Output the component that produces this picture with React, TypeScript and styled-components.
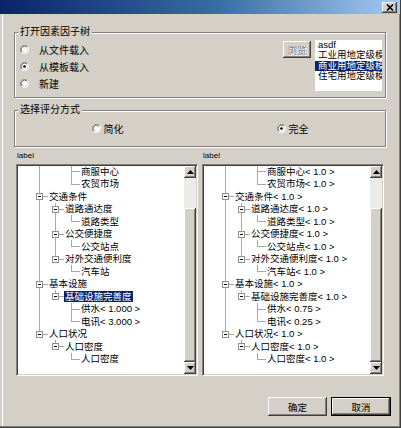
import React from "react";
import styled, { createGlobalStyle, css } from "styled-components";

const Global = createGlobalStyle`
  html, body { margin: 0; padding: 0; background: #d4d0c8; }
  body {
    width: 401px; height: 428px; overflow: hidden;
    font-family: "Liberation Sans", "Noto Sans CJK SC", sans-serif;
  }
  * { box-sizing: border-box; }
`;

const FONT = `"Liberation Sans", "Noto Sans CJK SC", sans-serif`;

const Window = styled.div`
  width: 401px;
  height: 428px;
  display: flex;
  flex-direction: column;
  background: #d4d0c8;
  border-right: 1px solid #404040;
  border-bottom: 1px solid #404040;
  box-shadow: inset -1px -1px 0 #808080, inset 2px 0 0 #d4d0c8, inset 3px 0 0 #fff;
`;

const TitleBar = styled.div`
  height: 14px;
  flex: none;
  display: flex;
  align-items: center;
  justify-content: flex-end;
  padding-right: 3px;
  background: linear-gradient(to right, #0a246a 0%, #3a6ea5 55%, #a6caf0 100%);
`;

const raised = css`
  background: #d4d0c8;
  box-shadow: inset -1px -1px 0 #404040, inset 1px 1px 0 #fff,
    inset -2px -2px 0 #808080, inset 2px 2px 0 #d4d0c8;
`;

const CloseButton = styled.div`
  ${raised};
  width: 15px;
  height: 11px;
  display: flex;
  align-items: center;
  justify-content: center;
`;

const Body = styled.div`
  flex: 1;
  display: flex;
  flex-direction: column;
  padding: 12px 14px 11px 14px;
`;

const Group = styled.fieldset<{ $mt: number }>`
  margin: ${(p) => p.$mt}px 0 0 0;
  padding: 0;
  border: 1px solid #808080;
  box-shadow: inset 1px 1px 0 #fff, 1px 1px 0 #fff;
  min-width: 0;
`;

const Legend = styled.legend`
  margin-left: 3px;
  padding: 0 2px;
  background: #d4d0c8;
  font-family: ${FONT};
  font-size: 10px;
  line-height: 12px;
  color: #000;
`;

const OpenContent = styled.div`
  display: flex;
  align-items: flex-start;
  padding: 2px 3px 5px 5px;
`;

const RadioColumn = styled.div`
  flex: 1;
  display: flex;
  flex-direction: column;
  padding-top: 1px;
`;

const RadioRow = styled.label<{ $gap: number; $h: number }>`
  display: flex;
  align-items: center;
  gap: ${(p) => p.$gap}px;
  height: ${(p) => p.$h}px;
  font-family: ${FONT};
  font-size: 10px;
  color: #000;
`;

const BrowseButton = styled.div`
  ${raised};
  width: 28px;
  height: 17px;
  margin-top: 1px;
  margin-right: 4px;
  display: flex;
  align-items: center;
  justify-content: center;
  font-family: ${FONT};
  font-size: 9.5px;
  color: #808080;
  text-shadow: 1px 1px 0 #fff;
`;

const ListBox = styled.div`
  width: 67px;
  height: 51px;
  background: #fff;
  overflow: hidden;
  display: flex;
  flex-direction: column;
`;

const ListItem = styled.div<{ $sel?: boolean }>`
  height: 10.4px;
  line-height: 10.4px;
  padding-left: 3px;
  white-space: nowrap;
  font-family: ${FONT};
  font-size: 9.5px;
  color: ${(p) => (p.$sel ? "#fff" : "#000")};
  background: ${(p) => (p.$sel ? "#0a246a" : "transparent")};
`;

const ModeContent = styled.div`
  display: grid;
  grid-template-columns: 1fr 1fr;
  justify-items: center;
  padding: 0 0 6px 0;
`;

const LabelsAndTrees = styled.div`
  display: grid;
  grid-template-columns: 182px 182px;
  column-gap: 4px;
  margin: 4px 0 0 2px;
`;

const TreeColumn = styled.div`
  display: flex;
  flex-direction: column;
`;

const SmallLabel = styled.div`
  font-family: ${FONT};
  font-size: 8px;
  line-height: 10px;
  height: 10px;
  margin: 0 0 3px 1px;
  color: #000;
`;

const TreeBox = styled.div`
  height: 212px;
  display: flex;
  background: #fff;
  border: 1px solid;
  border-color: #808080 #fff #fff #808080;
  box-shadow: inset 1px 1px 0 #404040, inset -1px -1px 0 #d4d0c8;
  padding: 1px;
`;

const TreeArea = styled.div`
  flex: 1;
  overflow: hidden;
  min-width: 0;
`;

const TreeList = styled.div`
  margin-top: -1px;
  display: flex;
  flex-direction: column;
`;

const Row = styled.div`
  display: flex;
  align-items: center;
  height: 12.5px;
  padding-left: 14px;
  white-space: nowrap;
`;

const Guide = styled.span<{ $on: boolean }>`
  position: relative;
  width: 16px;
  flex: none;
  align-self: stretch;
  ${(p) =>
    p.$on &&
    css`
      &::before {
        content: "";
        position: absolute;
        left: 7px;
        top: 0;
        bottom: 0;
        border-left: 1px solid #a8a8a8;
      }
    `}
`;

const Joint = styled.span<{ $last: boolean }>`
  position: relative;
  width: 16px;
  flex: none;
  align-self: stretch;
  &::before {
    content: "";
    position: absolute;
    left: 7px;
    top: 0;
    bottom: ${(p) => (p.$last ? "50%" : "0")};
    border-left: 1px solid #a8a8a8;
  }
  &::after {
    content: "";
    position: absolute;
    left: 7px;
    top: 50%;
    width: 9px;
    border-top: 1px solid #a8a8a8;
  }
`;

const Expander = styled.span`
  position: absolute;
  z-index: 1;
  left: 4px;
  top: calc(50% - 3px);
  width: 7px;
  height: 7px;
  border: 1px solid #909090;
  background: #fff;
  &::after {
    content: "";
    position: absolute;
    left: 1px;
    top: 2px;
    width: 3px;
    border-top: 1px solid #000;
  }
`;

const NodeText = styled.span<{ $sel?: boolean }>`
  font-family: ${FONT};
  font-size: 9.5px;
  line-height: 11px;
  height: 11px;
  padding: 0 1px;
  color: ${(p) => (p.$sel ? "#fff" : "#000")};
  background: ${(p) => (p.$sel ? "#0a246a" : "transparent")};
`;

const ScrollBar = styled.div`
  width: 12px;
  flex: none;
  display: flex;
  flex-direction: column;
`;

const ScrollButton = styled.div`
  ${raised};
  height: 12px;
  flex: none;
  display: flex;
  align-items: center;
  justify-content: center;
`;

const TrackLight = styled.div<{ $h: number }>`
  height: ${(p) => p.$h}px;
  flex: none;
  background: #ecebe7;
`;

const Thumb = styled.div`
  ${raised};
  flex: 1;
`;

const ButtonRow = styled.div`
  margin-top: auto;
  display: flex;
  justify-content: flex-end;
  gap: 4px;
  padding-right: -5px;
  margin-right: -5px;
`;

const DialogButton = styled.div<{ $default?: boolean }>`
  ${raised};
  width: ${(p) => (p.$default ? 60 : 59)}px;
  height: 19px;
  display: flex;
  align-items: center;
  justify-content: center;
  font-family: ${FONT};
  font-size: 9.5px;
  color: #000;
  ${(p) =>
    p.$default &&
    css`
      box-shadow: inset 0 0 0 1px #000, inset -2px -2px 0 #404040,
        inset 2px 2px 0 #fff, inset -3px -3px 0 #808080;
    `}
`;

const Radio = ({ checked }: { checked?: boolean }) => (
  <svg width="9" height="9" viewBox="0 0 12 12" style={{ flex: "none" }}>
    <circle cx="6" cy="6" r="5.5" fill="#fff" />
    <path d="M2.11 9.89 A5.5 5.5 0 0 1 9.89 2.11" stroke="#808080" fill="none" />
    <path d="M9.89 2.11 A5.5 5.5 0 0 1 2.11 9.89" stroke="#fff" fill="none" />
    <path d="M2.82 9.18 A4.5 4.5 0 0 1 9.18 2.82" stroke="#404040" fill="none" />
    <path d="M9.18 2.82 A4.5 4.5 0 0 1 2.82 9.18" stroke="#d4d0c8" fill="none" />
    {checked && <circle cx="6" cy="6" r="1.8" fill="#000" />}
  </svg>
);

const Arrow = ({ up }: { up?: boolean }) => (
  <svg width="7" height="4" viewBox="0 0 7 4">
    <path d={up ? "M3.5 0 L7 4 L0 4 Z" : "M0 0 L7 0 L3.5 4 Z"} fill="#000" />
  </svg>
);

type TreeNode = {
  text: string;
  level: number;
  guides: boolean[];
  last: boolean;
  open?: boolean;
  selected?: boolean;
};

const base: TreeNode[] = [
  { text: "商服中心", level: 2, guides: [true, false], last: false },
  { text: "农贸市场", level: 2, guides: [true, false], last: true },
  { text: "交通条件", level: 0, guides: [], last: false, open: true },
  { text: "道路通达度", level: 1, guides: [true], last: false, open: true },
  { text: "道路类型", level: 2, guides: [true, true], last: true },
  { text: "公交便捷度", level: 1, guides: [true], last: false, open: true },
  { text: "公交站点", level: 2, guides: [true, true], last: true },
  { text: "对外交通便利度", level: 1, guides: [true], last: true, open: true },
  { text: "汽车站", level: 2, guides: [true, false], last: true },
  { text: "基本设施", level: 0, guides: [], last: false, open: true },
  { text: "基础设施完善度", level: 1, guides: [true], last: true, open: true },
  { text: "供水", level: 2, guides: [true, false], last: false },
  { text: "电讯", level: 2, guides: [true, false], last: true },
  { text: "人口状况", level: 0, guides: [], last: true, open: true },
  { text: "人口密度", level: 1, guides: [false], last: true, open: true },
  { text: "人口密度", level: 2, guides: [false, false], last: true },
];

const leftRows: TreeNode[] = base.map((n, i) => ({
  ...n,
  text: i === 11 ? "供水< 1.000 >" : i === 12 ? "电讯< 3.000 >" : n.text,
  selected: i === 10,
}));

const rightRows: TreeNode[] = base.map((n, i) => ({
  ...n,
  text: n.text + (i === 11 ? "< 0.75 >" : i === 12 ? "< 0.25 >" : "< 1.0 >"),
}));

const Tree = ({ rows }: { rows: TreeNode[] }) => (
  <TreeBox>
    <TreeArea>
      <TreeList>
        {rows.map((r, i) => (
          <Row key={i}>
            {r.guides.map((g, k) => (
              <Guide key={k} $on={g} />
            ))}
            <Joint $last={r.last}>{r.open && <Expander />}</Joint>
            <NodeText $sel={r.selected}>{r.text}</NodeText>
          </Row>
        ))}
      </TreeList>
    </TreeArea>
    <ScrollBar>
      <ScrollButton>
        <Arrow up />
      </ScrollButton>
      <TrackLight $h={30} />
      <Thumb />
      <ScrollButton>
        <Arrow />
      </ScrollButton>
    </ScrollBar>
  </TreeBox>
);

export default function App() {
  return (
    <>
      <Global />
      <Window>
        <TitleBar>
          <CloseButton>
            <svg width="8" height="7" viewBox="0 0 8 7">
              <path d="M1 0.5 L7 6.5 M7 0.5 L1 6.5" stroke="#000" strokeWidth="1.6" />
            </svg>
          </CloseButton>
        </TitleBar>
        <Body>
          <Group $mt={0}>
            <Legend>打开因素因子树</Legend>
            <OpenContent>
              <RadioColumn>
                <RadioRow $gap={10} $h={17}>
                  <Radio />
                  从文件载入
                </RadioRow>
                <RadioRow $gap={10} $h={17}>
                  <Radio checked />
                  从模板载入
                </RadioRow>
                <RadioRow $gap={10} $h={17}>
                  <Radio />
                  新建
                </RadioRow>
              </RadioColumn>
              <BrowseButton>浏览</BrowseButton>
              <ListBox>
                <ListItem>asdf</ListItem>
                <ListItem>工业用地定级模</ListItem>
                <ListItem $sel>商业用地定级模</ListItem>
                <ListItem>住宅用地定级模</ListItem>
              </ListBox>
            </OpenContent>
          </Group>
          <Group $mt={6}>
            <Legend>选择评分方式</Legend>
            <ModeContent>
              <RadioRow $gap={3} $h={24}>
                <Radio />
                简化
              </RadioRow>
              <RadioRow $gap={3} $h={24}>
                <Radio checked />
                完全
              </RadioRow>
            </ModeContent>
          </Group>
          <LabelsAndTrees>
            <TreeColumn>
              <SmallLabel>label</SmallLabel>
              <Tree rows={leftRows} />
            </TreeColumn>
            <TreeColumn>
              <SmallLabel>label</SmallLabel>
              <Tree rows={rightRows} />
            </TreeColumn>
          </LabelsAndTrees>
          <ButtonRow>
            <DialogButton>确定</DialogButton>
            <DialogButton $default>取消</DialogButton>
          </ButtonRow>
        </Body>
      </Window>
    </>
  );
}
